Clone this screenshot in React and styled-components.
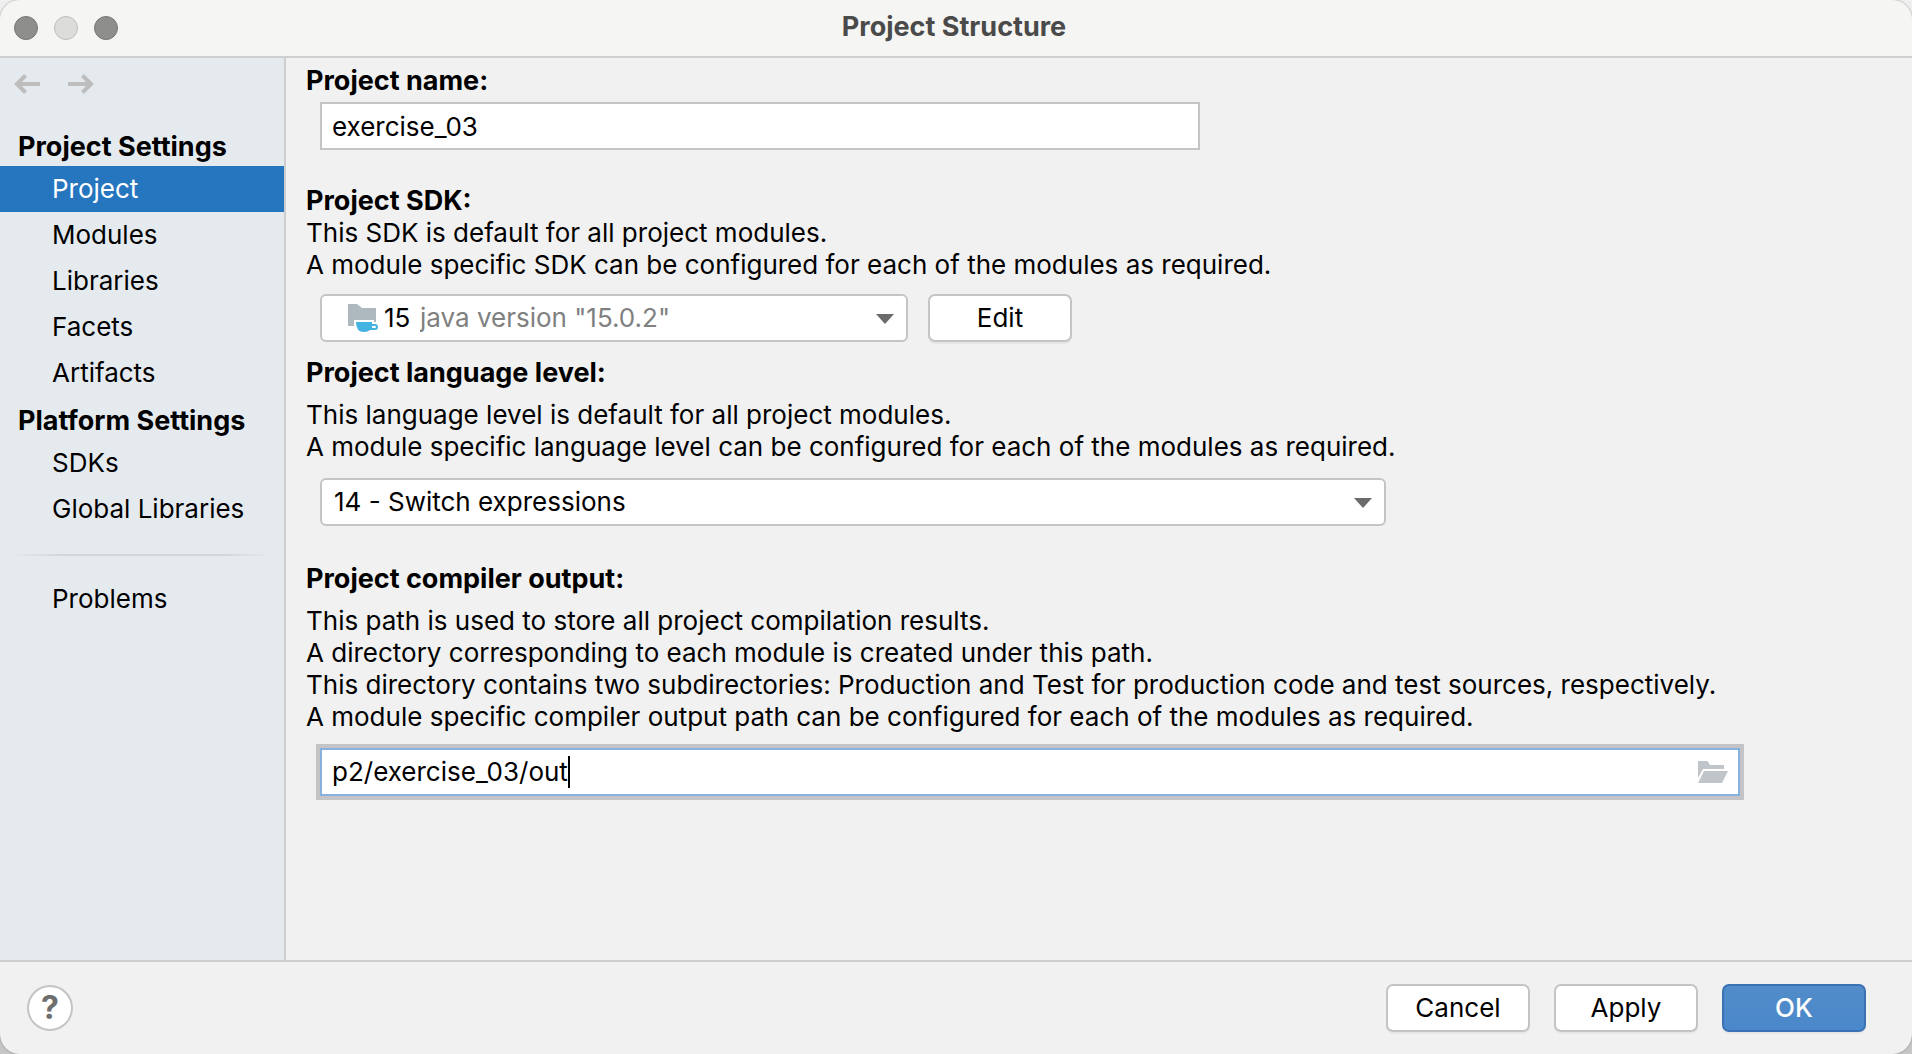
import React, { useState } from "react";
import styled, { createGlobalStyle, css } from "styled-components";

const GlobalStyle = createGlobalStyle`
  *, *::before, *::after { box-sizing: border-box; }
  body {
    margin: 0;
    background: linear-gradient(#f0f0f0, #c6c6c6);
    color: #000;
    font: 400 26px/32px Inter, "Liberation Sans", sans-serif;
  }
  button, input, select { font: inherit; color: inherit; }
  h1, h2, p, ul { margin: 0; padding: 0; font-size: inherit; }
`;

const Window = styled.div`
  display: flex;
  flex-direction: column;
  min-height: 100vh;
  overflow: hidden;
  border-radius: 20px;
  background: #f1f1f1;
  box-shadow: 0 0 2px #777;
`;

const TitleBar = styled.header`
  display: grid;
  grid-template-columns: 1fr auto 1fr;
  align-items: center;
  height: 58px;
  padding: 0 18px 0 14px;
  border-bottom: 2px solid #cfcfcf;
  background: #f5f5f3;
`;

const Lights = styled.div`
  display: flex;
  gap: 16px;
`;

const Light = styled.button`
  width: 24px;
  height: 24px;
  padding: 0;
  border: 1px solid ${(p) => (p.$dim ? "#bdbdbb" : "#767674")};
  border-radius: 50%;
  background: ${(p) => (p.$dim ? "#dcdcda" : "#8e8e8c")};
`;

const Title = styled.h1`
  padding-bottom: 2px;
  color: #4a4a4a;
  font-size: 27px;
  font-weight: 700;
  line-height: 32px;
`;

const Body = styled.div`
  display: flex;
  flex: 1;
`;

const Sidebar = styled.nav`
  flex: none;
  width: 286px;
  border-right: 2px solid #cdced0;
  background: #e5eaef;
`;

const History = styled.div`
  display: flex;
  gap: 28px;
  padding: 16px 14px 28px;
`;

const ArrowButton = styled.button`
  display: flex;
  width: 26px;
  height: 20px;
  padding: 0;
  border: 0;
  background: none;
`;

const GroupTitle = styled.h2`
  padding: 9px 18px 3px;
  font-size: 27px;
  font-weight: 700;
`;

const NavList = styled.ul`
  list-style: none;
`;

const NavLink = styled.a`
  display: block;
  padding: 7px 0 7px 52px;
  color: ${(p) => (p.$active ? "#fff" : "#000")};
  background: ${(p) => (p.$active ? "#2675bf" : "transparent")};
  text-decoration: none;
`;

const Divider = styled.hr`
  height: 2px;
  margin: 22px 12px 20px;
  border: 0;
  background: linear-gradient(90deg, transparent, #d3d5d8 20%, #d3d5d8 80%, transparent);
`;

const Content = styled.main`
  flex: 1;
  min-width: 0;
  padding: 7px 20px 0;
`;

const Section = styled.section`
  margin-bottom: ${(p) => p.$after}px;
`;

const Heading = styled.label`
  display: block;
  font-size: 27px;
  font-weight: 700;
`;

const Description = styled.p`
  margin-top: ${(p) => (p.$spaced ? 10 : 0)}px;
  white-space: pre-line;
`;

const Row = styled.div`
  display: flex;
  gap: 20px;
  margin: ${(p) => p.$above}px 0 0 14px;
`;

const fieldBox = css`
  height: 48px;
  border: 2px solid #c4c4c4;
  background: #fff;
`;

const NameInput = styled.input`
  ${fieldBox}
  width: 100%;
  max-width: 880px;
  padding: 0 10px;
  outline: 0;
`;

const Combo = styled.div`
  position: relative;
  width: 100%;
  max-width: ${(p) => p.$max}px;
`;

const Select = styled.select`
  ${fieldBox}
  display: block;
  width: 100%;
  padding: 0 48px 0 ${(p) => (p.$prefixed ? 98 : 12)}px;
  border-radius: 6px;
  color: ${(p) => (p.$prefixed ? "#808080" : "#000")};
  appearance: none;
  outline: 0;
`;

const Prefix = styled.span`
  position: absolute;
  inset: 0 auto 0 28px;
  display: flex;
  align-items: center;
  gap: 6px;
  pointer-events: none;
`;

const Chevron = styled.svg`
  position: absolute;
  top: 20px;
  right: 14px;
  pointer-events: none;
`;

const PathField = styled.label`
  ${fieldBox}
  display: flex;
  align-items: center;
  width: 100%;
  max-width: 1420px;
  padding: 0 10px;
  border-color: #87afdf;
  box-shadow: 0 0 0 4px #c4c4c6;
  cursor: text;
`;

const PathInput = styled.input`
  field-sizing: content;
  padding: 0;
  border: 0;
  outline: 0;
  background: none;
  caret-color: transparent;
`;

const Caret = styled.span`
  width: 2px;
  height: 32px;
  background: #000;
`;

const BrowseButton = styled.button`
  display: flex;
  margin-left: auto;
  padding: 0;
  border: 0;
  background: none;
`;

const Button = styled.button`
  flex: none;
  width: 144px;
  height: 48px;
  padding: 0;
  border: 2px solid ${(p) => (p.$primary ? "#3a72b4" : "#c4c4c4")};
  border-radius: 7px;
  background: ${(p) => (p.$primary ? "linear-gradient(#528cc9, #4a88cb)" : "#fff")};
  box-shadow: 0 2px 0 #e6e6e6;
  color: ${(p) => (p.$primary ? "#fff" : "#000")};
  font-weight: ${(p) => (p.$primary ? 500 : 400)};
`;

const Footer = styled.footer`
  display: flex;
  align-items: center;
  gap: 24px;
  height: 94px;
  padding: 0 46px 0 27px;
  border-top: 2px solid #cecece;
`;

const HelpButton = styled.button`
  width: 46px;
  height: 46px;
  margin-right: auto;
  padding: 0;
  border: 2px solid #c4c4c4;
  border-radius: 50%;
  background: #fff;
  color: #6e6e6e;
  font-size: 32px;
  font-weight: 700;
`;

function Arrow({ forward }) {
  return (
    <svg width="26" height="20" viewBox="0 0 26 20" fill="none" stroke="#bdbdbd" strokeWidth="4" aria-hidden="true">
      {forward ? <path d="M0 10H23M14.5 1.5L23 10L14.5 18.5" /> : <path d="M26 10H3M11.5 1.5L3 10L11.5 18.5" />}
    </svg>
  );
}

function DropArrow() {
  return (
    <Chevron width="18" height="10" viewBox="0 0 18 10" aria-hidden="true">
      <path d="M0 0H18L9 10Z" fill="#6b6b6b" />
    </Chevron>
  );
}

function SdkIcon() {
  return (
    <svg width="30" height="28" viewBox="0 0 30 28" aria-hidden="true">
      <path d="M0 0H9L14 4H28V18H26V16H6V22H0Z" fill="#adb8bf" />
      <path d="M8 18H24V20H27A3 3 0 0 1 27 26H22Q20 28 16 28Q8 28 8 18ZM24 22V24H27A1 1 0 0 0 27 22Z" fill="#43b4e2" fillRule="evenodd" />
    </svg>
  );
}

function FolderIcon() {
  return (
    <svg width="30" height="22" viewBox="0 0 30 22" aria-hidden="true">
      <path d="M0 0H9.5L12 4H26V8H5L0 17Z" fill="#bfc5c9" />
      <path d="M6 10H30L24 22H0Z" fill="#bfc5c9" />
    </svg>
  );
}

const projectPages = ["Project", "Modules", "Libraries", "Facets", "Artifacts"];
const platformPages = ["SDKs", "Global Libraries"];

function Pages({ items, active, onSelect }) {
  return (
    <NavList>
      {items.map((name) => (
        <li key={name}>
          <NavLink
            href={"#" + name.toLowerCase().replace(" ", "-")}
            $active={name === active}
            aria-current={name === active ? "page" : undefined}
            onClick={() => onSelect(name)}
          >
            {name}
          </NavLink>
        </li>
      ))}
    </NavList>
  );
}

export default function App() {
  const [page, setPage] = useState("Project");
  const [name, setName] = useState("exercise_03");
  const [output, setOutput] = useState("p2/exercise_03/out");

  return (
    <>
      <GlobalStyle />
      <Window>
        <TitleBar>
          <Lights>
            <Light aria-label="Close" />
            <Light aria-label="Minimize" $dim />
            <Light aria-label="Zoom" />
          </Lights>
          <Title>Project Structure</Title>
        </TitleBar>

        <Body>
          <Sidebar>
            <History>
              <ArrowButton aria-label="Back"><Arrow /></ArrowButton>
              <ArrowButton aria-label="Forward"><Arrow forward /></ArrowButton>
            </History>
            <GroupTitle>Project Settings</GroupTitle>
            <Pages items={projectPages} active={page} onSelect={setPage} />
            <GroupTitle>Platform Settings</GroupTitle>
            <Pages items={platformPages} active={page} onSelect={setPage} />
            <Divider />
            <Pages items={["Problems"]} active={page} onSelect={setPage} />
          </Sidebar>

          <Content>
            <Section $after={35}>
              <Heading htmlFor="name">Project name:</Heading>
              <Row $above={5}>
                <NameInput id="name" value={name} onChange={(e) => setName(e.target.value)} />
              </Row>
            </Section>

            <Section $after={15}>
              <Heading htmlFor="sdk">Project SDK:</Heading>
              <Description>
                {"This SDK is default for all project modules.\nA module specific SDK can be configured for each of the modules as required."}
              </Description>
              <Row $above={13}>
                <Combo $max={588}>
                  <Select id="sdk" $prefixed>
                    <option>java version "15.0.2"</option>
                  </Select>
                  <Prefix><SdkIcon />15</Prefix>
                  <DropArrow />
                </Combo>
                <Button>Edit</Button>
              </Row>
            </Section>

            <Section $after={37}>
              <Heading htmlFor="level">Project language level:</Heading>
              <Description $spaced>
                {"This language level is default for all project modules.\nA module specific language level can be configured for each of the modules as required."}
              </Description>
              <Row $above={15}>
                <Combo $max={1066}>
                  <Select id="level">
                    <option>14 - Switch expressions</option>
                  </Select>
                  <DropArrow />
                </Combo>
              </Row>
            </Section>

            <Section $after={20}>
              <Heading htmlFor="output">Project compiler output:</Heading>
              <Description $spaced>
                {"This path is used to store all project compilation results.\nA directory corresponding to each module is created under this path.\nThis directory contains two subdirectories: Production and Test for production code and test sources, respectively.\nA module specific compiler output path can be configured for each of the modules as required."}
              </Description>
              <Row $above={15}>
                <PathField htmlFor="output">
                  <PathInput id="output" value={output} onChange={(e) => setOutput(e.target.value)} />
                  <Caret />
                  <BrowseButton aria-label="Browse"><FolderIcon /></BrowseButton>
                </PathField>
              </Row>
            </Section>
          </Content>
        </Body>

        <Footer>
          <HelpButton aria-label="Help">?</HelpButton>
          <Button>Cancel</Button>
          <Button>Apply</Button>
          <Button $primary>OK</Button>
        </Footer>
      </Window>
    </>
  );
}
